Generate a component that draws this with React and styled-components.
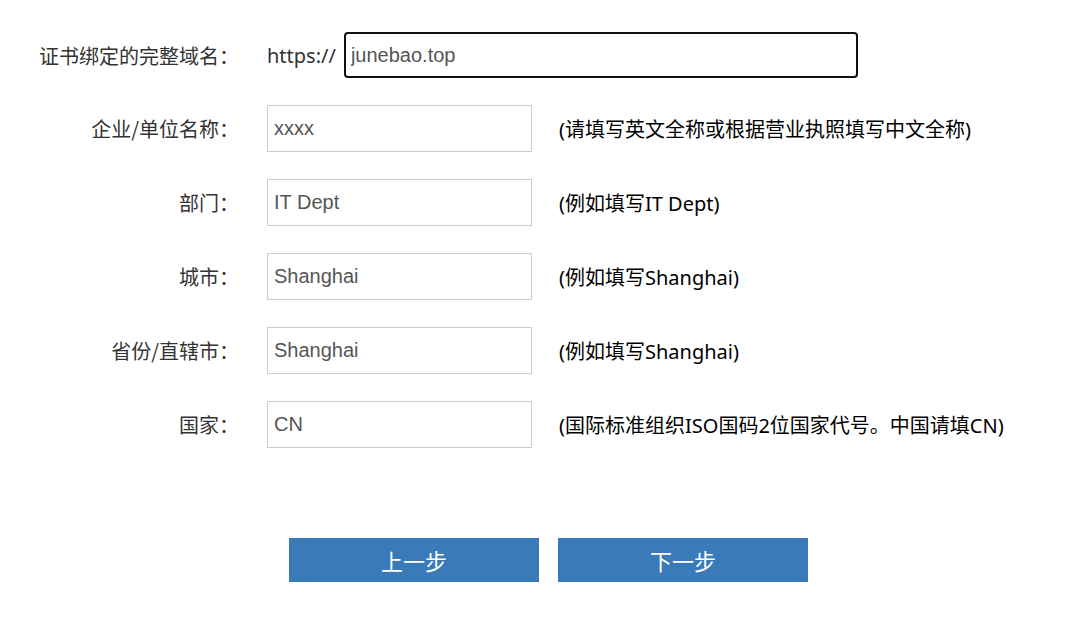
import React from 'react';
import styled, { createGlobalStyle } from 'styled-components';

const GlobalStyles = createGlobalStyle`
    html, body {
        margin     : 0;
        padding    : 0;
        background : #fff;
    }

    body {
        font-family : "Noto Sans", "Noto Sans CJK SC", sans-serif;
    }
`

const fields = [
    { label: '企业/单位名称：', value: 'xxxx', hint: '(请填写英文全称或根据营业执照填写中文全称)' },
    { label: '部门：', value: 'IT Dept', hint: '(例如填写IT Dept)' },
    { label: '城市：', value: 'Shanghai', hint: '(例如填写Shanghai)' },
    { label: '省份/直辖市：', value: 'Shanghai', hint: '(例如填写Shanghai)' },
    { label: '国家：', value: 'CN', hint: '(国际标准组织ISO国码2位国家代号。中国请填CN)' },
]

function App() {

    return (
        <Page>
            <GlobalStyles />
            <Form>
                <Row>
                    <Label>证书绑定的完整域名：</Label>
                    <Field>
                        <Prefix>https://</Prefix>
                        <Input $wide defaultValue='junebao.top' autoFocus />
                    </Field>
                </Row>
                {fields.map(f => (
                    <Row key={f.label}>
                        <Label>{f.label}</Label>
                        <Field>
                            <Input defaultValue={f.value} />
                            <Hint>{f.hint}</Hint>
                        </Field>
                    </Row>
                ))}
            </Form>
            <ButtonBar>
                <Button>上一步</Button>
                <Button>下一步</Button>
            </ButtonBar>
        </Page>
    );
}

export default App;

const Page = styled.div`
    width       : 1073px;
    height      : 625px;
    padding-top : 32px;
    box-sizing  : border-box;
`

const Form = styled.div`
    display        : flex;
    flex-direction : column;
    gap            : 27px;
`

const Row = styled.div`
    display     : flex;
    align-items : center;
`

const Label = styled.div`
    width        : 239px;
    margin-right : 28px;
    text-align   : right;
    font-family  : "Noto Sans CJK SC", sans-serif;
    font-size    : 20px;
    color        : #333;
    white-space  : nowrap;
`

const Field = styled.div`
    display     : flex;
    align-items : center;
`

const Prefix = styled.span`
    font-size    : 20px;
    color        : #333;
    margin-right : 8px;
`

const Input = styled.input`
    box-sizing    : border-box;
    width         : ${p => p.$wide ? '514px' : '265px'};
    height        : ${p => p.$wide ? '46px' : '47px'};
    padding       : 0 ${p => p.$wide ? '5px' : '6px'};
    border        : ${p => p.$wide ? '2px solid #111' : '1px solid #ccc'};
    border-radius : ${p => p.$wide ? '4px' : '0'};
    outline       : none;
    font-family   : "Liberation Sans", Arial, sans-serif;
    font-size     : 20px;
    color         : #555;
    background    : #fff;
`

const Hint = styled.span`
    margin-left : 27px;
    font-family : "Noto Sans", "Noto Sans CJK SC", sans-serif;
    font-size   : 20px;
    color       : #000;
    white-space : nowrap;
`

const ButtonBar = styled.div`
    display      : flex;
    gap          : 19px;
    margin-top   : 90px;
    padding-left : 289px;
`

const Button = styled.button`
    width       : 250px;
    height      : 44px;
    border      : none;
    background  : #3a7ab8;
    color       : #fff;
    font-family : "Noto Sans CJK SC", sans-serif;
    font-size   : 22px;
    cursor      : pointer;
`
